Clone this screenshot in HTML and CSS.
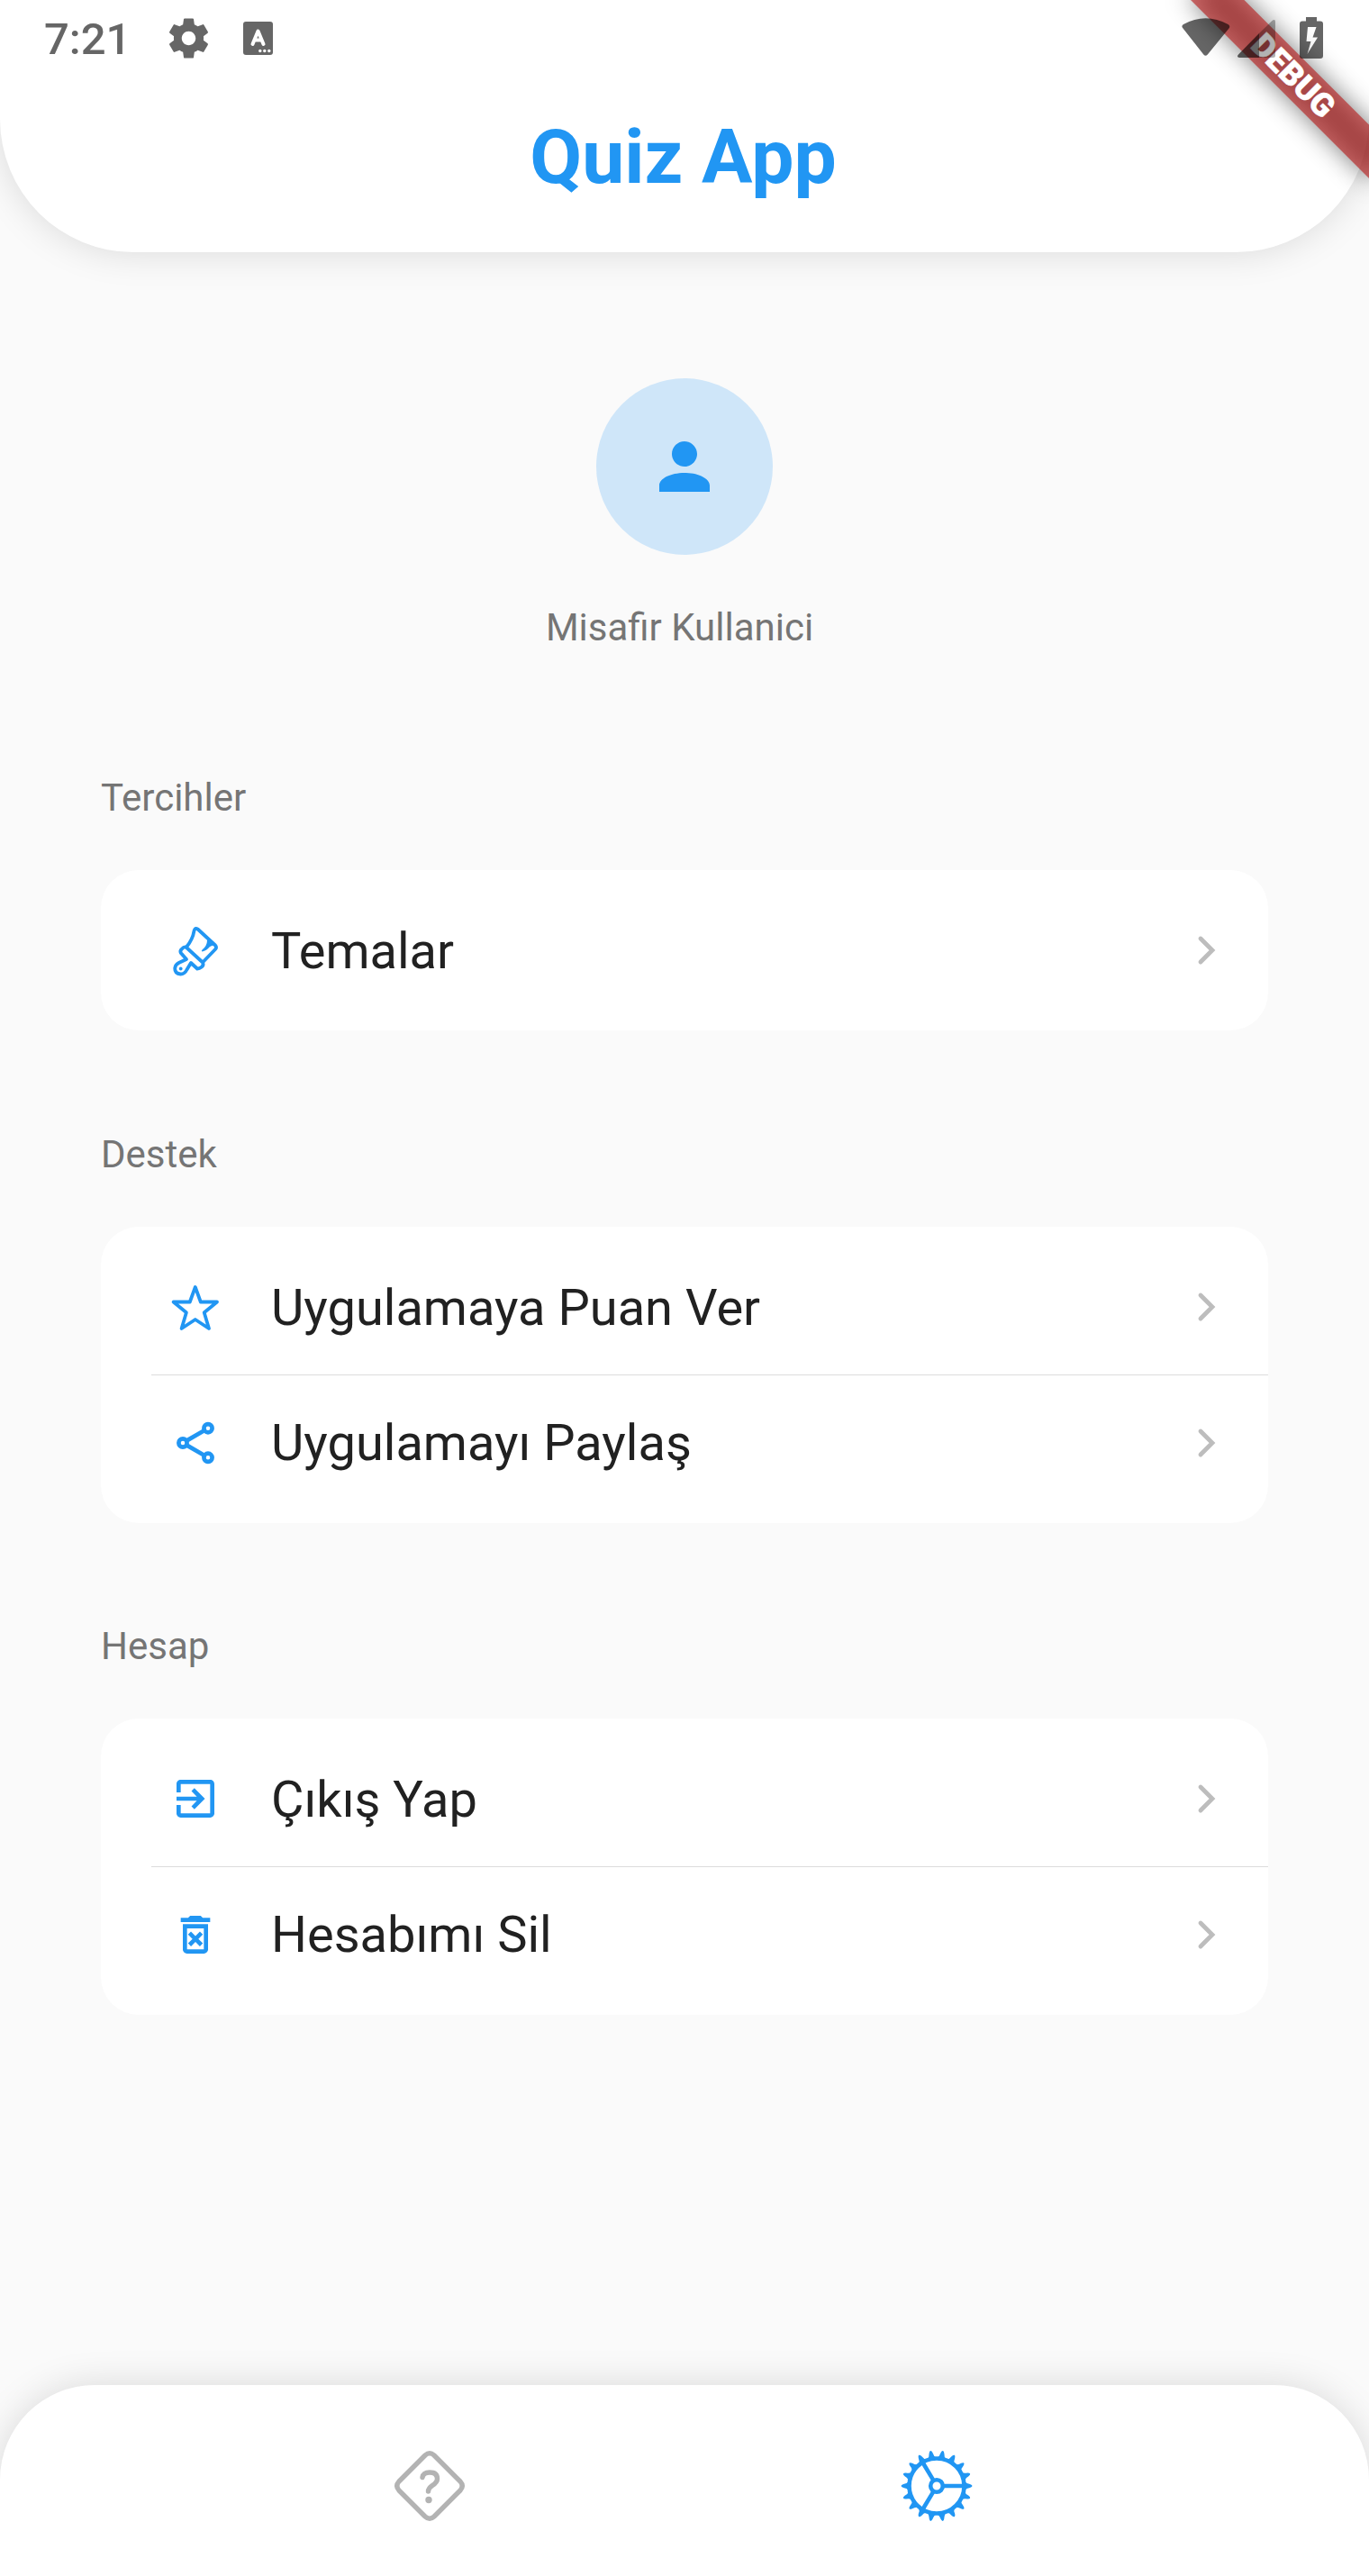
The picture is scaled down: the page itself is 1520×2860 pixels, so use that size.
FILE: index.html
```html
<!DOCTYPE html>
<html lang="en">
<head>
<meta charset="utf-8">
<title>Quiz App</title>
<link rel="stylesheet" href="styles.css">
</head>
<body>
<div class="screen">
  <header class="header">
    <h1 class="title">Quiz App</h1>
  </header>

  <main class="content">
    <section class="profile">
      <div class="avatar">
        <svg class="avatar-icon" viewBox="0 0 24 24"><path d="M12 12c2.210 0 4-1.790 4-4s-1.790-4-4-4-4 1.790-4 4 1.790 4 4 4zm0 2c-4.420 0-8 1.790-8 4v2h16v-2c0-2.210-3.580-4-8-4z"/></svg>
      </div>
      <p class="user-name">Misafir Kullanici</p>
    </section>

    <h2 class="section-title">Tercihler</h2>
    <ul class="card">
      <li class="row">
        <svg class="icon" viewBox="1 0 56 56"><g class="line"><path d="M19 24.500Q26 16 27.500 6.500Q28.500 2.500 31.500 4.500L51 22.500Q53 25 51 27L37.500 41"/><path d="M18.500 24.500L37 41.500Q38.500 44.500 36 46.500T31 48.500L24 42L19.500 49.500Q17 54.500 12.500 54.500Q6 54 6.200 48Q6.500 44 10.500 42L19 38L12.800 31Q11.500 28.500 14 26.500Q16 24 18.500 24.500z"/></g><path class="fill" d="M44 15.500L51.500 22.500Q46.500 22.500 44.500 24.500Q41.500 28.500 36.500 29.500Q35 29 36.500 27.500Q42 23 42 17z"/><circle class="fill" cx="12.700" cy="48.500" r="1.900"/></svg>
        <span class="label">Temalar</span>
        <svg class="chevron" viewBox="0 0 20 32"><path d="M3 3l13 13L3 29"/></svg>
      </li>
    </ul>

    <h2 class="section-title support">Destek</h2>
    <ul class="card">
      <li class="row">
        <svg class="icon" viewBox="1 0 56 56"><path class="line" d="M28.800 6L34.800 22.500H53L38.700 34.300L44 52L28.800 42L13.600 52L18.900 34.300L4.600 22.500H22.800z"/></svg>
        <span class="label">Uygulamaya Puan Ver</span>
        <svg class="chevron" viewBox="0 0 20 32"><path d="M3 3l13 13L3 29"/></svg>
      </li>
      <li class="row divided">
        <svg class="icon" viewBox="0 0 56 56"><g class="line thick"><circle cx="14" cy="28" r="4.600"/><circle cx="42" cy="11.700" r="4.600"/><circle cx="42" cy="44.300" r="4.600"/><path d="M18.500 25.400L37.700 14.300M18.500 30.600L37.700 41.700"/></g></svg>
        <span class="label">Uygulamayı Paylaş</span>
        <svg class="chevron" viewBox="0 0 20 32"><path d="M3 3l13 13L3 29"/></svg>
      </li>
    </ul>

    <h2 class="section-title">Hesap</h2>
    <ul class="card">
      <li class="row">
        <svg class="icon" viewBox="0 0 24 24"><path class="fill" d="M10.090 15.590L11.500 17l5-5-5-5-1.410 1.410L12.670 11H3v2h9.670l-2.580 2.590zM19 3H5c-1.110 0-2 .9-2 2v4h2V5h14v14H5v-4H3v4c0 1.100.89 2 2 2h14c1.100 0 2-.9 2-2V5c0-1.100-.9-2-2-2z"/></svg>
        <span class="label">Çıkış Yap</span>
        <svg class="chevron" viewBox="0 0 20 32"><path d="M3 3l13 13L3 29"/></svg>
      </li>
      <li class="row divided">
        <svg class="icon" viewBox="0 0 24 24"><path class="fill" d="M6 19c0 1.100.9 2 2 2h8c1.100 0 2-.9 2-2V7H6v12zM8 9h8v10H8V9zM8.460 11.880L9.870 10.470L12 12.590L14.120 10.470L15.530 11.880L13.410 14L15.530 16.120L14.120 17.530L12 15.410L9.880 17.530L8.470 16.120L10.590 14zM15.500 4l-1-1h-5l-1 1H5v2h14V4z" fill-rule="evenodd"/></svg>
        <span class="label">Hesabımı Sil</span>
        <svg class="chevron" viewBox="0 0 20 32"><path d="M3 3l13 13L3 29"/></svg>
      </li>
    </ul>
  </main>

  <nav class="tabs">
    <svg class="tab" viewBox="0 0 84 84"><g class="tab-line"><path d="M37 8Q42 3.500 47 8L76 37Q80.500 42 76 47L47 76Q42 80.500 37 76L8 47Q3.500 42 8 37z"/><path d="M34 32.500q1-5.500 8-5.500q8.500 0 8.500 7q0 4-5.500 7.500q-4.500 3-4.500 6.500"/></g><circle class="tab-dot" cx="41" cy="57.500" r="3.700"/></svg>
    <svg class="tab" viewBox="-42 -42 84 84">
      <circle r="30.500" class="ring"/>
      <circle r="6.800" class="ring"/>
      <path class="ring" d="M8 0H29M-4 -6.900L-15.500 -26M-4 6.900L-15.500 26"/>
      <defs><path id="tooth" d="M31-5.200Q33-2.400 37-2Q39.500-1.200 39.500 0T37 2Q33 2.400 31 5.200z"/></defs>
      <g class="teeth" id="teeth"></g>
    </svg>
  </nav>

  <div class="debug">
    <div class="debug-shadow"></div>
    <div class="debug-band">DEBUG</div>
  </div>

  <div class="status">
    <span class="clock">7:21</span>
    <svg class="s-gear" viewBox="0 0 24 24"><path d="M19.430 12.980c.04-.32.07-.64.07-.98s-.03-.66-.07-.98l2.110-1.650c.19-.15.24-.42.12-.64l-2-3.460c-.12-.22-.39-.3-.61-.22l-2.490 1c-.52-.4-1.080-.73-1.690-.98l-.38-2.650C14.460 2.180 14.250 2 14 2h-4c-.25 0-.46.18-.49.42l-.38 2.650c-.61.25-1.170.59-1.690.98l-2.490-1c-.23-.09-.49 0-.61.22l-2 3.460c-.13.22-.07.49.12.64l2.110 1.650c-.04.32-.07.65-.07.98s.03.66.07.98l-2.110 1.650c-.19.15-.24.42-.12.64l2 3.460c.12.22.39.3.61.22l2.490-1c.52.4 1.080.73 1.690.98l.38 2.650c.03.24.24.42.49.42h4c.25 0 .46-.18.49-.42l.38-2.650c.61-.25 1.170-.59 1.690-.98l2.490 1c.23.09.49 0 .61-.22l2-3.460c.12-.22.07-.49-.12-.64l-2.110-1.650zM12 15.500c-1.930 0-3.500-1.570-3.500-3.500s1.570-3.500 3.500-3.500 3.500 1.570 3.500 3.500-1.570 3.500-3.500 3.500z"/></svg>
    <svg class="s-key" viewBox="0 0 33 37"><rect width="33" height="37" rx="3"/><path class="cut" d="M10.500 25L16.500 10.500L22.500 25M12.500 20.500H20.500"/><g class="dots"><circle cx="18.800" cy="32.500" r="1.700"/><circle cx="23.800" cy="32.500" r="1.700"/><circle cx="28.800" cy="32.500" r="1.700"/></g></svg>
    <span class="spacer"></span>
    <svg class="s-right" viewBox="-1 -1 160 48"><path d="M1.500 12.500Q-1 10 2 8Q26.500-5.500 51.500 8Q54.500 10 52.500 12.500L28.800 41.500Q26.500 44 24.300 41.500z"/><path class="dim" d="M86 18V45H101.500Q104 45 104 42.500V5Q104 2 101 3.500z"/><path d="M86 18V45H64Q60.500 44 63 41.500z"/><path fill-rule="evenodd" d="M138 0h12v4.500h4q3 0 3 3V43q0 3-3 3H134q-3 0-3-3V7.500q0-3 3-3h4zM140 11L138.500 27H143.500L139.500 41L151 22.500H145.500L149.500 11z"/></svg>
  </div>
</div>
<script src="teeth.js"></script>
</body>
</html>
```
FILE: teeth.js
```js
// Places the teeth evenly round the ring of the settings gear.
const TOOTH_COUNT = 18;
const teeth = document.getElementById('teeth');
for (let i = 0; i < TOOTH_COUNT; i++) {
  const tooth = document.createElementNS('http://www.w3.org/2000/svg', 'use');
  tooth.setAttribute('href', '#tooth');
  tooth.setAttribute('transform', `rotate(${i * 360 / TOOTH_COUNT})`);
  teeth.appendChild(tooth);
}
```
FILE: styles.css
```css
* { box-sizing: border-box; }
body, h1, h2, p, ul { margin: 0; padding: 0; }
body { font-family: Roboto, "Noto Sans", sans-serif; background: #fafafa; }
svg { display: block; flex: none; overflow: visible; }

.screen {
  position: relative;
  display: flex;
  flex-direction: column;
  width: 1520px;
  height: 2860px;
  overflow: hidden;
  background: #fafafa;
}

.header {
  display: flex;
  justify-content: center;
  height: 280px;
  padding: 126px 3px 0 0;
  border-radius: 0 0 148px 148px;
  background: #fff;
  box-shadow: 0 0 41px rgba(0, 0, 0, .135);
}
.title { font-size: 84px; line-height: 98px; font-weight: 700; color: #2196f3; }

.content { flex: 1; padding: 140px 112px 0; }
.profile { display: flex; flex-direction: column; align-items: center; }
.avatar {
  display: flex;
  align-items: center;
  justify-content: center;
  width: 196px;
  height: 196px;
  border-radius: 50%;
  background: #cfe6f9;
}
.avatar-icon { width: 84px; height: 84px; fill: #2196f3; }
.user-name {
  margin: 56px 11px 0 0;
  font-size: 42px;
  line-height: 49px;
  color: #757575;
}

.section-title {
  margin-top: 112px;
  font-size: 42px;
  line-height: 49px;
  font-weight: 400;
  color: #757575;
}
.section-title.support { margin-top: 113px; }
.profile + .section-title { margin-top: 140px; }

.card {
  list-style: none;
  margin-top: 56px;
  padding: 14px 0;
  border-radius: 42px;
  background: #fff;
}
.row {
  position: relative;
  display: flex;
  align-items: center;
  height: 150px;
  padding: 0 58px 0 77px;
}
.row.divided { height: 151px; padding-top: 1px; }
.row.divided::before {
  content: "";
  position: absolute;
  top: 0;
  left: 56px;
  right: 0;
  height: 1px;
  background: #dcdcdc;
}
.icon { width: 56px; height: 56px; }
.line { fill: none; stroke: #2196f3; stroke-width: 3.8; stroke-linejoin: round; stroke-linecap: round; }
.line.thick { stroke-width: 4.7; }
.fill { fill: #2196f3; }
.label { flex: 1; margin-left: 56px; padding-top: 2px; font-size: 56px; line-height: 66px; color: #212121; }
.divided .label { padding-top: 0; }
.chevron { width: 20px; height: 32px; fill: none; stroke: #bdbdbd; stroke-width: 4.8; stroke-linecap: round; }

.tabs {
  display: flex;
  align-items: center;
  justify-content: space-between;
  height: 212px;
  padding: 11px 438px 0 435px;
  border-radius: 105px 105px 0 0;
  background: #fff;
  box-shadow: 0 0 41px rgba(0, 0, 0, .135);
}
.tab { width: 84px; height: 84px; }
.tab-line { fill: none; stroke: #b3b3b3; stroke-width: 5.4; stroke-linejoin: round; stroke-linecap: round; }
.tab-dot { fill: #b3b3b3; }
.ring { fill: none; stroke: #2196f3; stroke-width: 4.6; }
.teeth { fill: #2196f3; }

.debug {
  position: absolute;
  top: 0;
  left: 1520px;
  width: 0;
  height: 0;
  transform: rotate(45deg);
}
.debug-shadow, .debug-band {
  position: absolute;
  left: -140px;
  top: 98px;
  width: 280px;
  height: 42px;
}
.debug-shadow { background: rgba(0, 0, 0, .5); filter: blur(14px); }
.debug-band {
  background: rgba(183, 28, 28, .627);
  color: #fff;
  font-size: 35.7px;
  line-height: 42px;
  font-weight: 900;
  text-align: center;
  -webkit-text-stroke: .5px #fff;
}

.status {
  position: absolute;
  top: 0;
  left: 0;
  display: flex;
  align-items: center;
  width: 1520px;
  height: 84px;
  padding: 0 49px;
  color: #666;
  fill: rgba(0, 0, 0, .6);
}
.clock { width: 134px; font-size: 49px; line-height: 58px; font-weight: 500; padding-top: 3px; }
.s-gear { width: 53px; height: 53px; }
.s-key { width: 33px; height: 37px; margin-left: 34px; }
.cut { fill: none; stroke: #fff; stroke-width: 4; stroke-linecap: round; stroke-linejoin: round; }
.dots { fill: #fff; }
.spacer { flex: 1; }
.s-right { width: 160px; height: 48px; }
.dim { fill: rgba(0, 0, 0, .3); }
```
